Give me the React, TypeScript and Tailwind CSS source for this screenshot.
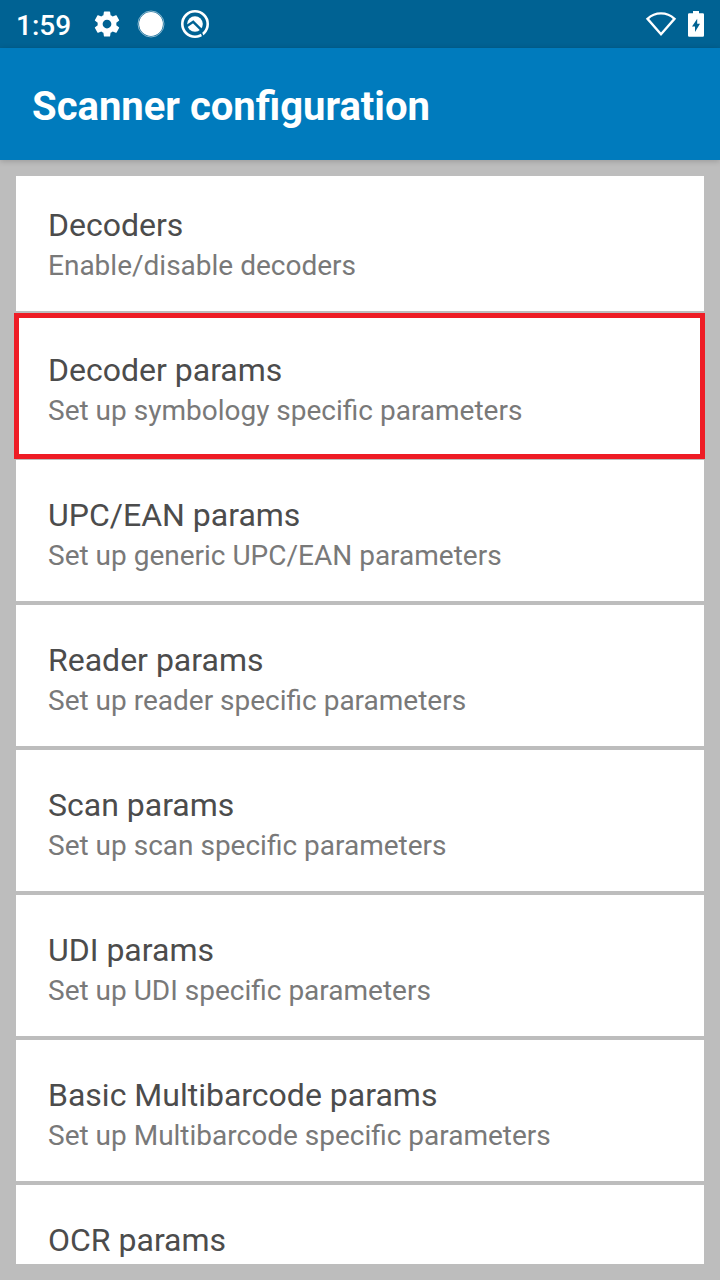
type Item = { title: string; summary?: string };

const items: Item[] = [
  { title: "Decoders", summary: "Enable/disable decoders" },
  { title: "Decoder params", summary: "Set up symbology specific parameters" },
  { title: "UPC/EAN params", summary: "Set up generic UPC/EAN parameters" },
  { title: "Reader params", summary: "Set up reader specific parameters" },
  { title: "Scan params", summary: "Set up scan specific parameters" },
  { title: "UDI params", summary: "Set up UDI specific parameters" },
  { title: "Basic Multibarcode params", summary: "Set up Multibarcode specific parameters" },
  { title: "OCR params" },
];

function GearIcon() {
  return (
    <svg className="h-[30px] w-[30px]" viewBox="0 0 24 24" fill="#fff">
      <path d="M19.43 12.98c.04-.32.07-.64.07-.98s-.03-.66-.07-.98l2.11-1.65c.19-.15.24-.42.12-.64l-2-3.46c-.12-.22-.39-.3-.61-.22l-2.49 1c-.52-.4-1.08-.73-1.69-.98l-.38-2.65C14.46 2.18 14.25 2 14 2h-4c-.25 0-.46.18-.49.42l-.38 2.65c-.61.25-1.17.59-1.69.98l-2.49-1c-.23-.09-.49 0-.61.22l-2 3.46c-.13.22-.07.49.12.64l2.11 1.65c-.04.32-.07.65-.07.98s.03.66.07.98l-2.11 1.65c-.19.15-.24.42-.12.64l2 3.46c.12.22.39.3.61.22l2.49-1c.52.4 1.08.73 1.69.98l.38 2.65c.03.24.24.42.49.42h4c.25 0 .46-.18.49-.42l.38-2.65c.61-.25 1.17-.59 1.69-.98l2.49 1c.23.09.49 0 .61-.22l2-3.46c.12-.22.07-.49-.12-.64l-2.11-1.65zM12 15.5c-1.93 0-3.5-1.57-3.5-3.5s1.57-3.5 3.5-3.5 3.5 1.57 3.5 3.5-1.57 3.5-3.5 3.5z" />
    </svg>
  );
}

function DotIcon() {
  return (
    <svg className="ml-[14px] h-[30px] w-[30px]" viewBox="0 0 30 30">
      <circle cx="15" cy="15" r="13" fill="none" stroke="#fff" strokeOpacity="0.6" strokeWidth="0.9" />
      <circle cx="15" cy="15" r="11.9" fill="#fff" />
    </svg>
  );
}

function QIcon() {
  return (
    <svg className="ml-[14px] h-[30px] w-[30px]" viewBox="0 0 30 30" fill="none">
      <circle cx="15" cy="15" r="12.7" stroke="#fff" strokeWidth="2.6" />
      <circle cx="15" cy="15" r="7.8" fill="#fff" />
      <path d="M6.6 17.2L13.2 12.8L22.6 22.2" stroke="#006293" strokeWidth="2.4" />
      <path d="M20.8 22.6L23.2 28" stroke="#006293" strokeWidth="1.6" />
    </svg>
  );
}

function WifiIcon() {
  return (
    <svg className="h-[28px] w-[32px]" viewBox="0 0 32 28" fill="none">
      <path d="M2.5 8.8Q8.3 3.4 16 3.4T29.5 8.8L16 24.2Z" stroke="#fff" strokeWidth="2.4" />
    </svg>
  );
}

function BatteryIcon() {
  return (
    <svg className="ml-[11px] h-[28px] w-[16px]" viewBox="0 0 16 28">
      <path
        fill="#fff"
        fillRule="evenodd"
        d="M5 1H11V3.2H14.8Q16 3.2 16 4.4V25.6Q16 26.8 14.8 26.8H1.2Q0 26.8 0 25.6V4.4Q0 3.2 1.2 3.2H5ZM9.2 8.7L4 16.6H7V22L12 13.7H9.2Z"
      />
    </svg>
  );
}

function Row({ title, summary, highlighted }: Item & { highlighted: boolean }) {
  return (
    <li className="relative h-[141px] shrink-0 bg-white px-8 pt-9">
      <div className="text-[32px] leading-[38px] text-[#4c4c4c]">{title}</div>
      {summary && <div className="mt-[5px] text-[28px] leading-[34px] text-[#797979]">{summary}</div>}
      {highlighted && (
        <span className="pointer-events-none absolute -top-0.5 -left-0.5 z-10 h-[146px] w-[691px] border-5 border-[#ee1c25]" />
      )}
    </li>
  );
}

export default function App() {
  return (
    <div className="flex h-[1280px] w-[720px] flex-col overflow-hidden bg-[#bdbdbd] font-['Roboto',sans-serif]">
      <div className="flex h-12 shrink-0 items-center bg-[#006293] px-4 text-white">
        <span className="w-[76px] pt-[3px] text-[28px] leading-8 font-medium">1:59</span>
        <GearIcon />
        <DotIcon />
        <QIcon />
        <span className="flex-1" />
        <WifiIcon />
        <BatteryIcon />
      </div>
      <header className="z-10 flex h-28 shrink-0 items-center bg-[#007bbd] px-8 pt-1.5 shadow-[0_1px_6px_rgba(0,0,0,0.2)]">
        <h1 className="text-[40px] leading-[48px] font-bold text-white">Scanner configuration</h1>
      </header>
      <main className="min-h-0 flex-1 p-4">
        <div className="flex h-full flex-col [clip-path:inset(0_-2px)]">
          <ul className="-mt-1.5 flex flex-col gap-1">
            {items.map((item, i) => (
              <Row key={item.title} {...item} highlighted={i === 1} />
            ))}
          </ul>
        </div>
      </main>
    </div>
  );
}
